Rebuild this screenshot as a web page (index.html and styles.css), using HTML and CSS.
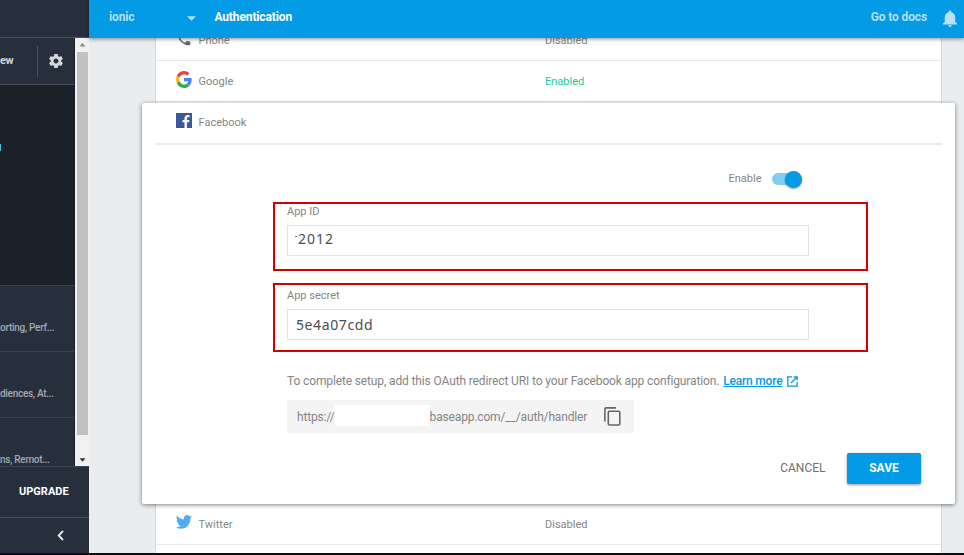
FILE: index.html
```html
<!DOCTYPE html>
<html lang="en">
<head>
<meta charset="utf-8">
<title>Authentication</title>
<link rel="stylesheet" href="styles.css">
</head>
<body>
<div class="app">
  <aside class="sidebar">
    <div class="brand"></div>
    <div class="side-body">
      <nav class="side-nav">
        <div class="overview">
          <span class="overview-label"><span class="t">ew</span></span>
          <span class="gear"><svg width="14" height="14" viewBox="2 2 20 20"><path fill="#d6d9dd" d="M19.43 12.98c.04-.32.07-.64.07-.98s-.03-.66-.07-.98l2.11-1.65c.19-.15.24-.42.12-.64l-2-3.46c-.12-.22-.39-.3-.61-.22l-2.49 1c-.52-.4-1.08-.73-1.69-.98l-.38-2.65C14.46 2.18 14.25 2 14 2h-4c-.25 0-.46.18-.49.42l-.38 2.65c-.61.25-1.17.59-1.69.98l-2.49-1c-.23-.09-.49 0-.61.22l-2 3.46c-.13.22-.07.49.12.64l2.11 1.65c-.04.32-.07.65-.07.98s.03.66.07.98l-2.11 1.65c-.19.15-.24.42-.12.64l2 3.46c.12.22.39.3.61.22l2.49-1c.52.4 1.08.73 1.69.98l.38 2.65c.03.24.24.42.49.42h4c.25 0 .46-.18.49-.42l.38-2.65c.61-.25 1.17-.59 1.69-.98l2.49 1c.23.09.49 0 .61-.22l2-3.46c.12-.22.07-.49-.12-.64l-2.11-1.65zM12 15.5c-1.93 0-3.5-1.57-3.5-3.5s1.57-3.5 3.5-3.5 3.5 1.57 3.5 3.5-1.57 3.5-3.5 3.5z"/></svg></span>
        </div>
        <div class="develop"><span class="active-mark"></span></div>
        <div class="group"><span class="t">orting, Perf...</span></div>
        <div class="group"><span class="t">diences, At...</span></div>
        <div class="group last"><span class="t">ns, Remot...</span></div>
      </nav>
      <div class="scrollbar">
        <svg width="7" height="4" viewBox="0 0 7 4"><path fill="#8b8b8b" d="M3.5 0 6.5 3.5h-6z"/></svg>
        <div class="thumb"></div>
        <svg width="7" height="4" viewBox="0 0 7 4"><path fill="#333" d="M3.5 3.7 6.5.3h-6z"/></svg>
      </div>
    </div>
    <div class="upgrade"><span class="t">UPGRADE</span></div>
    <div class="collapse"><svg width="7" height="11" viewBox="0 0 7 11"><path d="M6 1 1.7 5.5 6 10" fill="none" stroke="#e3e6ea" stroke-width="1.9"/></svg></div>
  </aside>
  <main class="main">
    <header class="topbar">
      <span class="project t">ionic</span>
      <svg class="caret" width="9" height="5" viewBox="0 0 9 5"><path fill="#b6e0f8" d="M0 .3h9L4.5 4.8z"/></svg>
      <span class="title t">Authentication</span>
      <span class="docs t">Go to docs</span>
      <svg class="bell" width="14" height="17" viewBox="4 2 16 20" preserveAspectRatio="none"><path fill="#b9e2f9" d="M12 22c1.1 0 2-.9 2-2h-4c0 1.100.89 2 2 2zm6-6v-5c0-3.070-1.640-5.640-4.500-6.320V4c0-.83-.67-1.500-1.500-1.500s-1.500.67-1.500 1.500v.68C7.630 5.360 6 7.920 6 11v5l-2 2v1h16v-1l-2-2z"/></svg>
    </header>
    <section class="content">
      <div class="row phone">
        <svg class="icon" width="14" height="14" viewBox="2 2 20 20"><path fill="#666" d="M6.620 10.790c1.440 2.830 3.760 5.140 6.590 6.590l2.200-2.200c.27-.27.67-.36 1.020-.24 1.120.37 2.330.57 3.570.57.55 0 1 .45 1 1V20c0 .55-.45 1-1 1-9.390 0-17-7.610-17-17 0-.55.45-1 1-1h3.500c.55 0 1 .45 1 1 0 1.250.2 2.450.57 3.570.11.35.03.74-.25 1.020l-2.200 2.200z"/></svg>
        <span class="name"><span class="t">Phone</span></span><span class="t">Disabled</span>
      </div>
      <div class="row">
        <svg class="icon" width="16" height="17" viewBox="0 0 48 48" preserveAspectRatio="none"><path fill="#EA4335" d="M24 9.500c3.540 0 6.710 1.220 9.210 3.600l6.850-6.850C35.900 2.380 30.470 0 24 0 14.620 0 6.510 5.380 2.560 13.220l7.980 6.190C12.430 13.720 17.740 9.500 24 9.500z"/><path fill="#4285F4" d="M46.980 24.550c0-1.570-.15-3.090-.38-4.550H24v9.020h12.940c-.58 2.960-2.260 5.480-4.780 7.180l7.730 6c4.510-4.180 7.090-10.360 7.090-17.650z"/><path fill="#FBBC05" d="M10.530 28.590c-.48-1.450-.76-2.990-.76-4.590s.27-3.140.76-4.590l-7.980-6.190C.92 16.460 0 20.120 0 24c0 3.880.92 7.540 2.560 10.780l7.970-6.190z"/><path fill="#34A853" d="M24 48c6.480 0 11.930-2.130 15.890-5.810l-7.730-6c-2.150 1.450-4.920 2.300-8.160 2.300-6.260 0-11.570-4.220-13.470-9.910l-7.980 6.190C6.510 42.620 14.620 48 24 48z"/></svg>
        <span class="name"><span class="t">Google</span></span><span class="t enabled">Enabled</span>
      </div>
      <article class="panel">
        <div class="panel-head">
          <svg class="icon" width="16" height="15" viewBox="0 0 16 15"><path fill="#3b5998" d="M0 0h16v15H0z"/><path fill="#fff" d="M8.500 15V9.200H6.500V6.900h2V5.300C8.500 3.300 9.700 2 11.700 2H13.500v2.200h-1.400c-.9 0-1.200.5-1.200 1.300v1.400h2.500l-.35 2.300H10.900V15z"/></svg>
          <span class="name"><span class="t">Facebook</span></span>
        </div>
        <div class="enable"><span class="t">Enable</span><span class="switch"><span class="knob"></span></span></div>
        <div class="field">
          <label class="t">App ID</label>
          <div class="input"><span class="tick"></span><span class="t">2012</span></div>
        </div>
        <div class="field secret">
          <label class="t">App secret</label>
          <div class="input"><span class="t">5e4a07cdd</span></div>
        </div>
        <p class="hint"><span class="t">To complete setup, add this OAuth redirect URI to your Facebook app configuration.</span><a class="t">Learn more</a><svg width="11" height="11" viewBox="0 0 11 11" fill="none" stroke="#039be5" stroke-width="1.300"><path d="M5 .8H.8v9.400h9.400V6M6.500.8h3.700v3.700M10 1 4 7"/></svg></p>
        <div class="uri">
          <span class="t">https://</span><span class="mask"></span><span class="t">baseapp.com/__/auth/handler</span>
          <svg width="17" height="19" viewBox="0 0 17 19" fill="none" stroke="#666" stroke-width="1.600"><path d="M12 .9H2.200Q.9.900.9 2.200V14.500"/><rect x="4.300" y="4.300" width="11.500" height="13.700" rx="1.200"/></svg>
        </div>
        <div class="actions"><span class="cancel"><span class="t">CANCEL</span></span><button><span class="t">SAVE</span></button></div>
      </article>
      <div class="row twitter">
        <svg class="icon" width="16" height="14" viewBox="0 2 24 20" preserveAspectRatio="none"><path fill="#50abf1" d="M23.950 4.570a10 10 0 0 1-2.820.77 4.960 4.960 0 0 0 2.160-2.720c-.95.55-2 .95-3.130 1.180a4.920 4.920 0 0 0-8.380 4.480C7.690 8.090 4.070 6.130 1.640 3.160a4.920 4.920 0 0 0 1.520 6.570 4.900 4.900 0 0 1-2.230-.61v.06a4.920 4.920 0 0 0 3.950 4.830 5 5 0 0 1-2.210.08 4.940 4.940 0 0 0 4.600 3.420A9.870 9.870 0 0 1 0 19.540a13.990 13.990 0 0 0 7.550 2.210c9.050 0 14-7.500 14-13.980 0-.21 0-.42-.02-.63a9.940 9.940 0 0 0 2.460-2.550z"/></svg>
        <span class="name"><span class="t">Twitter</span></span><span class="t">Disabled</span>
      </div>
      <div class="row"></div>
    </section>
  </main>
</div>
<div class="taskbar"></div>
</body>
</html>
```
FILE: styles.css
```css
* { box-sizing: border-box; }
body { margin: 0; width: 964px; height: 555px; overflow: hidden; font: 12px/16px Roboto, sans-serif; color: #858585; background: #e9edf0; }
svg { display: block; flex: none; }
.t { white-space: pre; }
.app { display: flex; height: 553px; overflow: hidden; }

.sidebar { width: 89px; flex: none; background: #272f3d; color: #a5abb3; display: flex; flex-direction: column; }
.brand { height: 38px; border-bottom: 1px solid #4b525e; }
.side-body { height: 428px; display: flex; overflow: hidden; }
.side-nav { width: 75px; border-right: 1px solid #1b212b; overflow: hidden; }
.overview { height: 47px; display: flex; align-items: center; border-bottom: 1px solid #4b525e; }
.overview-label { width: 38px; height: 31px; line-height: 30px; border-right: 1px solid #4b525e; color: #d6d9dd; font-weight: 700; font-size: 11px; letter-spacing: -.4px; }
.gear { margin-left: 11px; }
.develop { height: 200px; background: #1b2129; padding-top: 59px; }
.active-mark { display: block; width: 1px; height: 7px; background: #4dc3d2; }
.group { height: 66px; border-top: 1px solid #39414e; padding-top: 34px; font-size: 10px; color: #a4a9b1; letter-spacing: -.28px; font-weight: 500; }
.scrollbar { width: 14px; background: #f1f1f1; display: flex; flex-direction: column; align-items: center; padding: 5px 0 4px; }
.thumb { width: 11px; height: 383px; margin: 5px 0 auto; background: #c1c1c1; }
.upgrade { height: 52px; border-top: 1px solid #3d4451; border-bottom: 1px solid #4b525e; color: #fff; font-weight: 700; font-size: 11px; line-height: 49px; padding-left: 19px; }
.collapse { flex: 1; padding: 12px 0 0 57px; }

.main { flex: 1; min-width: 0; height: 553px; display: flex; flex-direction: column; }
.topbar { height: 38px; flex: none; background: #039be5; display: flex; align-items: center; padding: 0 7px 4px 20px; position: relative; z-index: 5; box-shadow: 0 1px 4px rgba(0,0,0,.45); font-weight: 700; letter-spacing: -.12px; color: #b3dff7; }
.project { width: 78px; }
.caret { margin-top: 2px; }
.title { margin-left: 18.4px; color: #fff; }
.docs { margin-left: auto; letter-spacing: -.12px; }
.bell { margin-left: 16px; margin-top: 3px; }

.content { width: 787px; margin: -18px 0 0 66px; background: #fff; border: solid #d5dadd; border-width: 0 1px; flex: none; }
.row, .panel-head, .enable { font-size: 11px; }
.row { height: 41px; border-bottom: 1px solid #e7e9ea; padding: 2px 0 0 20px; display: flex; align-items: center; }
.icon { margin-right: 6.5px; margin-top: -5px; }
.phone .icon { margin-left: 1px; margin-right: 7.5px; }
.name { width: 346.5px; }
.enabled { color: #1cc8a0; }
.panel { position: relative; width: 813px; height: 401px; margin: 1px 0 -1px -14px; background: #fff; border-radius: 2px; box-shadow: 0 1px 4px rgba(0,0,0,.5); padding: 0 13px; }
.panel-head { height: 42px; border-bottom: 2px solid #ebebeb; padding: 0 0 0 21px; display: flex; align-items: center; }
.enable { display: flex; justify-content: flex-end; align-items: center; padding: 25px 140px 0 0; height: 43px; }
.switch { width: 30px; height: 12px; border-radius: 6px; background: #81cdf2; margin-left: 10.5px; display: flex; align-items: center; justify-content: flex-end; }
.knob { width: 17px; height: 17px; border-radius: 50%; background: #039be5; box-shadow: 0 1px 2px rgba(0,0,0,.4); }
.field { width: 595px; height: 69px; margin: 14px 0 0 118px; border: 2px solid #d40000; padding-left: 12px; font-size: 11px; }
.field label { display: block; height: 21px; line-height: 15px; }
.input { width: 522px; height: 31px; border: 1px solid #e3e3e3; color: #4d4d4d; font: 14px/26px "Noto Sans", sans-serif; letter-spacing: 1px; display: flex; padding-left: 7px; }
.tick { width: 2px; height: 1px; margin: 10px 1px 0 0; background: #777; }
.field.secret { margin-top: 12px; padding-top: 3px; }
.secret .input { padding-left: 8px; line-height: 29px; letter-spacing: .6px; }
.hint { margin: 21px 0 0 132px; height: 16px; display: flex; align-items: center; letter-spacing: -.13px; }
.hint a { margin: 0 5px 0 4px; color: #039be5; text-decoration: underline; font-weight: 500; letter-spacing: -.2px; }
.uri { width: 347px; height: 33px; margin: 11px 0 0 132px; padding: 0 13px 0 10px; background: #f4f4f4; display: flex; align-items: center; border-radius: 1px; letter-spacing: -.16px; }
.mask { width: 95px; height: 21px; background: #fff; margin-top: -2px; }
.uri svg { margin-left: auto; }
.actions { margin-top: 20px; padding-right: 21px; height: 31px; display: flex; justify-content: flex-end; align-items: center; }
.cancel { margin-right: 21.5px; margin-top: -2px; color: #707070; }
button { width: 74px; height: 31px; border: 0; padding: 0 0 2px; border-radius: 2px; background: #039be5; color: #fff; font: 700 12px/16px Roboto, sans-serif; box-shadow: 0 1px 3px rgba(0,0,0,.4); }
.twitter { height: 42px; }
.taskbar { height: 2px; background: #0b0b0b; }
```
